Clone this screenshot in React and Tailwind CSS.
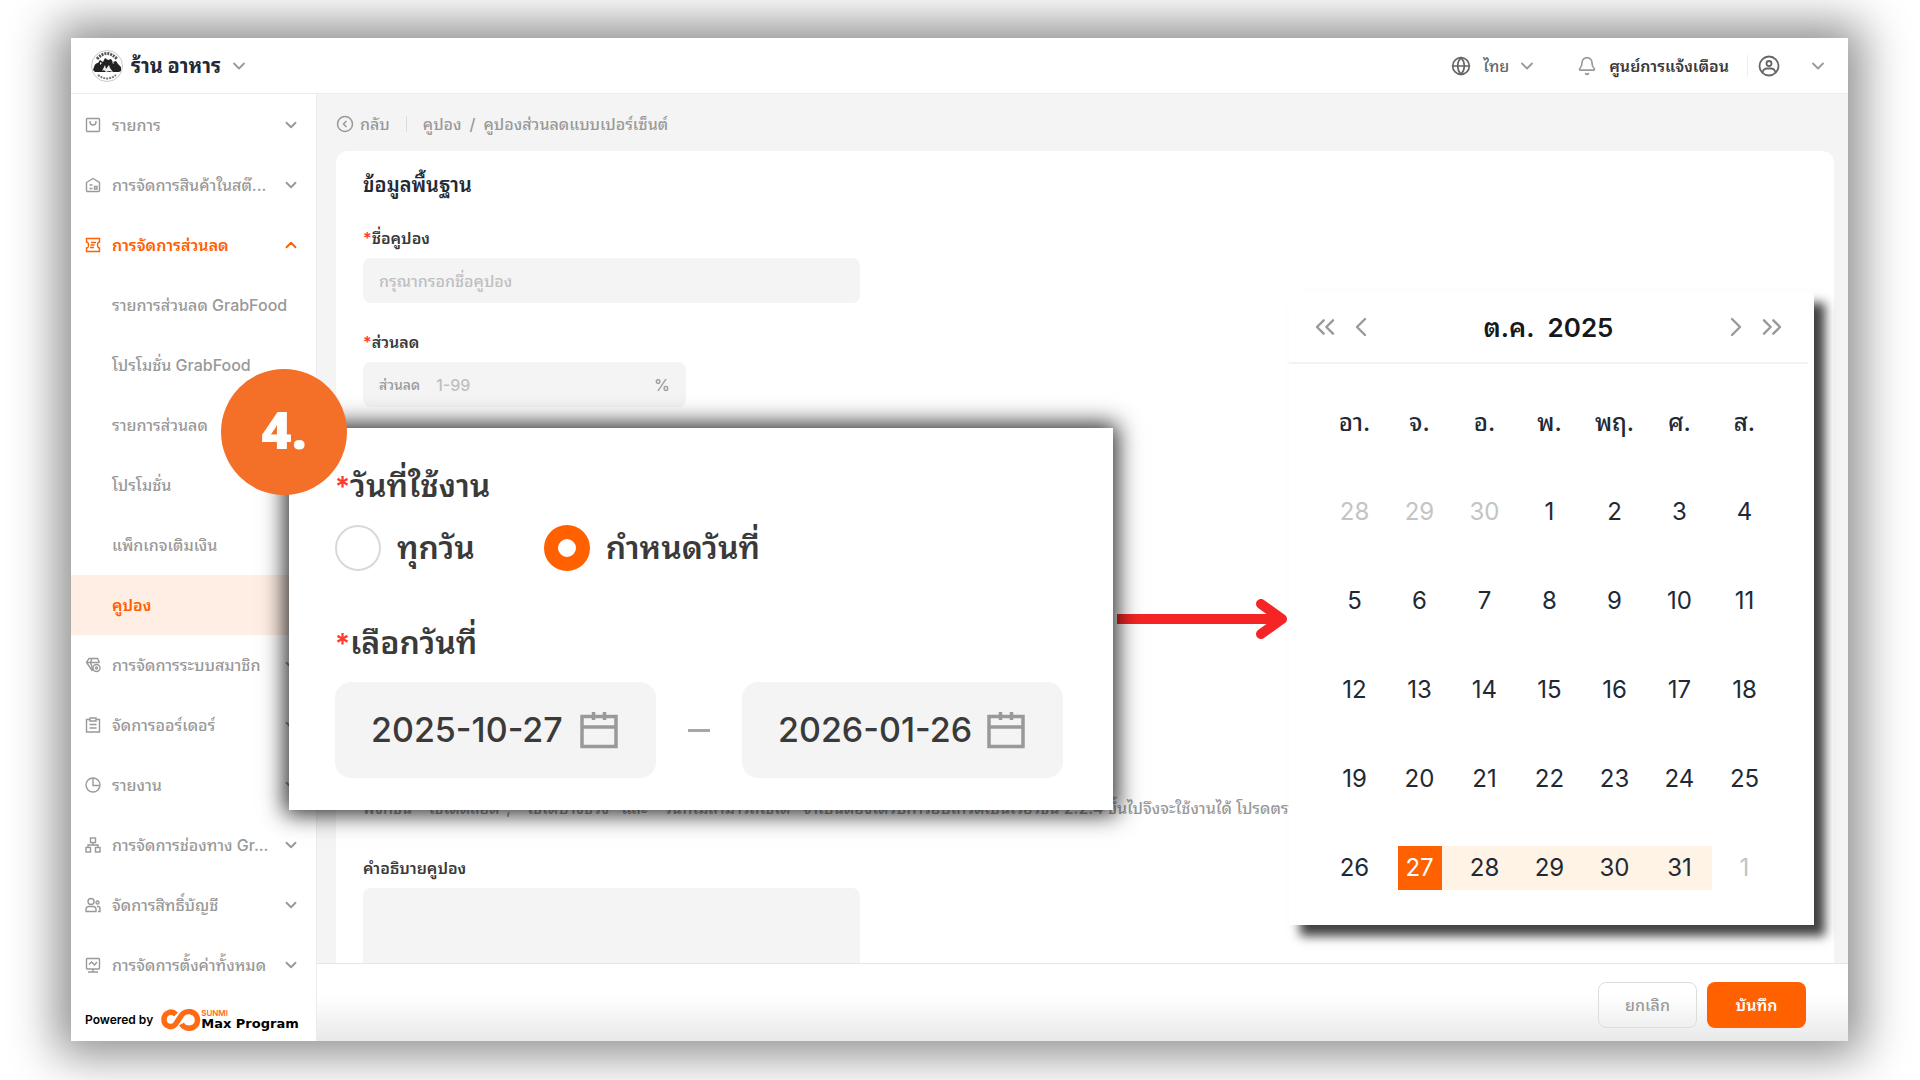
import React, { useState } from "react";
import { ChevronDown, ChevronUp, ChevronLeft, ChevronRight, ChevronsLeft, ChevronsRight, Globe, Bell } from "lucide-react";

const menu = [
  { label: "รายการ", icon: "bag" },
  { label: "การจัดการสินค้าในสต๊...", icon: "store" },
  { label: "การจัดการส่วนลด", icon: "ticket", open: true },
  { label: "รายการส่วนลด GrabFood", sub: true },
  { label: "โปรโมชั่น GrabFood", sub: true },
  { label: "รายการส่วนลด", sub: true },
  { label: "โปรโมชั่น", sub: true },
  { label: "แพ็กเกจเติมเงิน", sub: true },
  { label: "คูปอง", sub: true, active: true },
  { label: "การจัดการระบบสมาชิก", icon: "gem" },
  { label: "จัดการออร์เดอร์", icon: "clipboard" },
  { label: "รายงาน", icon: "pie" },
  { label: "การจัดการช่องทาง Gr...", icon: "network" },
  { label: "จัดการสิทธิ์บัญชี", icon: "users" },
  { label: "การจัดการตั้งค่าทั้งหมด", icon: "monitor" },
];

const weekDays = ["อา.", "จ.", "อ.", "พ.", "พฤ.", "ศ.", "ส."];
const weeks = [
  [28, 29, 30, 1, 2, 3, 4],
  [5, 6, 7, 8, 9, 10, 11],
  [12, 13, 14, 15, 16, 17, 18],
  [19, 20, 21, 22, 23, 24, 25],
  [26, 27, 28, 29, 30, 31, 1],
];

const shapes = {
  bag: (
    <>
      <rect x="1.5" y="1.5" width="13" height="13" rx="1" />
      <path d="M5 4v1a3 3 0 0 0 6 0V4" />
    </>
  ),
  store: (
    <>
      <path d="M1.5 5.5 8 1.5l6.5 4v8a1 1 0 0 1-1 1h-11a1 1 0 0 1-1-1z" />
      <path d="M4.5 8h3M4.5 11.5h3M9.5 9.5H12V12H9.5z" />
    </>
  ),
  ticket: (
    <>
      <path d="M1.5 1.5h13V5c-1.5 0-2 1-2 3s.5 3 2 3v3.5h-13V11c1.5 0 2-1 2-3s-.5-3-2-3z" />
      <path d="M6 5.5h5M5.5 8h4M5 10.5h4" />
    </>
  ),
  gem: (
    <>
      <path d="M7.5 14 1.5 5.5l2.5-4h8.5l2 4M1.5 5.5h13M5.5 5.5 8 13M7 1.5l-1.5 4" />
      <circle cx="11.5" cy="11" r="3.5" />
      <circle cx="11.5" cy="11" r="1" />
    </>
  ),
  clipboard: (
    <>
      <path d="M5 2.5H1.5V15h13V2.5H11" />
      <path d="M5 1h6v3H5zM4.5 7.5h7M4.5 11h7" />
    </>
  ),
  pie: (
    <>
      <circle cx="8" cy="8" r="7" />
      <path d="M8 1v7.5h7" />
    </>
  ),
  network: (
    <>
      <rect x="5.5" y="1" width="5" height="4.5" />
      <rect x="1" y="10.5" width="4.5" height="4.5" />
      <rect x="10.5" y="10.5" width="4.5" height="4.5" />
      <path d="M8 5.5V8M3 10.5V8h10v2.5" />
    </>
  ),
  users: (
    <>
      <circle cx="6" cy="4.5" r="3" />
      <path d="M1 14.5v-2a3 3 0 0 1 3-3h4a3 3 0 0 1 3 3v2z" />
      <circle cx="12.5" cy="5.5" r="1.5" />
      <path d="M12 9.5h1a2 2 0 0 1 2 2v3h-2" />
    </>
  ),
  monitor: (
    <>
      <rect x="1.5" y="1.5" width="13" height="10.5" rx="1" />
      <path d="M4 7.5 6.5 5l3 3L12 5M3 15h10M8 12v3" />
    </>
  ),
};

const MenuIcon = ({ name }) => (
  <svg viewBox="0 0 16 16" className="w-4 h-4 shrink-0" fill="none" stroke="currentColor" strokeWidth="1.4">
    {shapes[name]}
  </svg>
);

const CalendarIcon = () => (
  <svg viewBox="0 0 38 38" className="w-[38px] h-[38px] shrink-0" fill="none" stroke="#999999" strokeWidth="3.5">
    <path d="M2 5.5h34v30H2zM2 16h34M13.5 1v8M24.5 1v8" />
  </svg>
);

const ShopLogo = () => (
  <svg viewBox="0 0 32 32" className="w-8 h-8">
    <circle cx="16" cy="16" r="15.5" fill="#fff" stroke="#c9c9c9" />
    <path d="M6 9q10-11 20 0" fill="none" stroke="#555" strokeWidth="3" strokeDasharray="2 1" />
    <path d="M3 17q1-4 4-4l2-3 3 2 2-4 3 2 3-1 2 3 3-1 2 3 3 3v4l-2 1H4l-2-2z" fill="#222" />
    <path d="m11 21 3-6 1 4 3-4 1 3 3 4-4-1-3 1-2-2zM9 12l2 1-2 2zM21 11l2 2-1 1z" fill="#eee" />
    <path d="M7 25q9 7 18 0" fill="none" stroke="#777" strokeWidth="2" strokeDasharray="2 1" />
  </svg>
);

const SunmiLogo = () => (
  <svg viewBox="0 0 40 24" className="w-10 h-6" fill="none" stroke="#ff6a13" strokeWidth="5.5">
    <path d="M15 6.500C10 1.500 3 5.500 3 11.500c0 7 8 9.500 12 4l5-7.500C24 1 36.500 2.500 36.500 12S24 22.500 20.500 16" />
  </svg>
);

const Header = () => (
  <header className="h-[56px] shrink-0 flex items-center justify-between bg-white border-b border-[#ececec] pl-5 pr-5">
    <button className="flex items-center text-xl font-bold text-[#222936]">
      <ShopLogo />
      <span className="ml-2 mr-2">ร้าน อาหาร</span>
      <ChevronDown className="w-5 h-5 text-[#999999]" strokeWidth={2.2} />
    </button>
    <div className="flex items-center text-base text-[#666666]">
      <button className="flex items-center font-medium">
        <Globe className="w-5 h-5" strokeWidth={2} />
        <span className="ml-3 mr-2">ไทย</span>
        <ChevronDown className="w-5 h-5 text-[#999999]" strokeWidth={2.2} />
      </button>
      <button className="flex items-center ml-10 font-semibold text-[#3a3a3a]">
        <Bell className="w-5 h-5 text-[#999999]" strokeWidth={2} />
        <span className="ml-3">ศูนย์การแจ้งเตือน</span>
      </button>
      <button className="flex items-center ml-[18px] pl-2.5 border-l border-[#eeeeee]">
        <svg viewBox="0 0 22 22" className="w-[22px] h-[22px]" fill="none" stroke="currentColor" strokeWidth="1.8">
          <circle cx="11" cy="11" r="9.5" />
          <circle cx="11" cy="8.5" r="2.5" />
          <path d="M4.500 17.500q1-4 4.500-4h4q3.500 0 4.500 4" />
        </svg>
        <ChevronDown className="w-5 h-5 ml-7 text-[#999999]" strokeWidth={2.2} />
      </button>
    </div>
  </header>
);

const Sidebar = () => (
  <aside className="w-[246px] shrink-0 flex flex-col bg-white border-r border-[#ececec]">
    <nav className="pt-px">
      {menu.map((item) => (
        <a
          key={item.label}
          href="#"
          className={`h-[60px] flex items-center pl-3.5 pr-4 text-base whitespace-nowrap ${
            item.active
              ? "bg-[#ffeee3] font-semibold text-[#ff6000]"
              : item.open
                ? "font-semibold text-[#ff6000]"
                : "font-medium text-[#999999]"
          }`}
        >
          {item.sub ? <span className="w-4 shrink-0" /> : <MenuIcon name={item.icon} />}
          <span className="flex-1 ml-[11px]">{item.label}</span>
          {!item.sub &&
            (item.open ? (
              <ChevronUp className="w-[18px] h-[18px]" strokeWidth={2.5} />
            ) : (
              <ChevronDown className="w-[18px] h-[18px]" strokeWidth={2.5} />
            ))}
        </a>
      ))}
    </nav>
    <div className="flex-1 flex items-center pt-1 pl-3.5 text-xs font-semibold text-black whitespace-nowrap">
      Powered by
      <span className="ml-2">
        <SunmiLogo />
      </span>
      <span className="leading-none">
        <span className="block text-[8px] leading-[8px] text-[#ff6a13]">SUNMI</span>
        <span className="block font-['DejaVu_Sans'] text-[13px] leading-[14px] font-bold">Max Program</span>
      </span>
    </div>
  </aside>
);

const Label = ({ htmlFor, children, required }) => (
  <label htmlFor={htmlFor} className="block text-base leading-6 font-semibold text-[#3a3a3a]">
    {required && <span className="text-[#ff3b30]">*</span>}
    {children}
  </label>
);

const CouponForm = () => (
  <section className="flex-1 min-h-0 overflow-hidden bg-white rounded-t-xl ml-[19px] mr-3.5 px-[27px] pt-[18px]">
    <h2 className="text-xl leading-8 font-semibold text-[#222936] mb-[25px]">ข้อมูลพื้นฐาน</h2>
    <Label htmlFor="name" required>ชื่อคูปอง</Label>
    <input
      id="name"
      placeholder="กรุณากรอกชื่อคูปอง"
      className="block w-[497px] h-[45px] mt-2 mb-[27px] px-4 rounded-lg bg-[#f4f4f4] text-base font-medium placeholder:text-[#bfbfbf]"
    />
    <Label htmlFor="discount" required>ส่วนลด</Label>
    <div className="w-[323px] h-[45px] mt-2 px-4 flex items-center rounded-lg bg-[#f4f4f4] font-medium text-[#999999]">
      <span className="text-sm">ส่วนลด</span>
      <input id="discount" placeholder="1-99" className="flex-1 min-w-0 ml-4 text-base placeholder:text-[#bfbfbf]" />
      <span className="text-base">%</span>
    </div>
    <p className="mt-[389px] text-base leading-6 font-medium text-[#999999] whitespace-nowrap">
      ฟังก์ชัน &nbsp;"ใช้ได้ตลอด", &nbsp;"ใช้ได้บางช่วง" และ &nbsp;"วันที่ไม่สามารถใช้ได้" จำเป็นต้องได้รับการอัปเกรดเป็นเวอร์ชัน 2.2.4 ขึ้นไปจึงจะใช้งานได้ โปรดตรวจสอบ
    </p>
    <div className="mt-9">
      <Label htmlFor="desc">คำอธิบายคูปอง</Label>
      <textarea id="desc" className="block w-[497px] h-[120px] mt-2 rounded-lg bg-[#f4f4f4] resize-none" />
    </div>
  </section>
);

const DateField = ({ id, label, value }) => (
  <div className="w-[321px] h-[96px] flex items-center pl-9 pr-[38px] rounded-2xl bg-[#f4f4f4]">
    <input
      id={id}
      aria-label={label}
      defaultValue={value}
      className="flex-1 min-w-0 text-[34px] font-medium text-[#3a3a3a]"
    />
    <CalendarIcon />
  </div>
);

const DatePanel = () => {
  const [mode, setMode] = useState("range");
  const radio = "appearance-none w-[46px] h-[46px] rounded-full border-2 border-[#d9d9d9] checked:border-[14px] checked:border-[#ff6000] bg-white";

  return (
    <section className="relative shrink-0 w-[824px] h-[382px] mt-[136px] pl-[46px] pt-9 bg-white text-[32px] leading-[44px] font-semibold text-[#3a3a3a] shadow-[0_0_22px_4px_rgba(0,0,0,0.85)]">
      <p><span className="text-[28px] text-[#ff3b30]">*</span>วันที่ใช้งาน</p>
      <div className="flex items-center mt-4">
        <label className="flex items-center gap-4">
          <input type="radio" name="mode" className={radio} checked={mode === "all"} onChange={() => setMode("all")} />
          ทุกวัน
        </label>
        <label className="flex items-center gap-4 ml-[69px]">
          <input type="radio" name="mode" className={radio} checked={mode === "range"} onChange={() => setMode("range")} />
          กำหนดวันที่
        </label>
      </div>
      <label htmlFor="start" className="block mt-[50px]"><span className="text-[28px] text-[#ff3b30]">*</span>เลือกวันที่</label>
      <div className="flex items-center mt-4">
        <DateField id="start" label="วันที่เริ่มต้น" value="2025-10-27" />
        <span className="w-[22px] h-[3px] mx-8 bg-[#a6a6a6]" />
        <DateField id="end" label="วันที่สิ้นสุด" value="2026-01-26" />
      </div>
      <div className="absolute -left-[68px] -top-[59px] w-[126px] h-[126px] pb-1.5 flex items-center justify-center rounded-full bg-[#f46f27] text-white font-['Open_Sans'] text-[52px] font-extrabold">
        4.
      </div>
    </section>
  );
};

const Arrow = () => (
  <div className="flex-1 flex items-center mt-[305px] pl-1 pr-0.5 h-[44px]">
    <span className="flex-1 h-2.5 bg-[#f52525]" />
    <svg viewBox="0 0 32 40" className="w-8 h-10 -ml-2" fill="none" stroke="#f52525" strokeWidth="10" strokeLinecap="round" strokeLinejoin="round">
      <path d="M6 5 27 20 6 35M27 20H0" />
    </svg>
  </div>
);

const Calendar = () => {
  const cellStyle = (w, i, day) => {
    if ((w === 0 && i < 3) || (w === 4 && i === 6)) return "text-[#c4c4c4]";
    if (w === 4 && day === 27) return "text-white";
    return "text-[#222936]";
  };

  const rangeStyle = (w, i) => {
    if (w !== 4 || i === 0 || i === 6) return "";
    return i === 1 ? "bg-linear-to-r from-transparent from-50% to-[#fff3e6] to-50%" : "bg-[#fff3e6]";
  };

  return (
    <section className="shrink-0 w-[525px] bg-white shadow-[11px_11px_10px_0_rgba(0,0,0,0.75)]">
      <div className="h-[72px] mr-1.5 flex items-center px-5 border-b-2 border-[#f2f2f2] text-[#999999]">
        <button aria-label="ปีก่อน"><ChevronsLeft className="w-8 h-8" strokeWidth={1.8} /></button>
        <button aria-label="เดือนก่อน" className="ml-1"><ChevronLeft className="w-8 h-8" strokeWidth={1.8} /></button>
        <p className="flex-1 text-center text-[26px] font-semibold text-[#16181c]">ต.ค.&nbsp; 2025</p>
        <button aria-label="เดือนถัดไป" className="mr-1"><ChevronRight className="w-8 h-8" strokeWidth={1.8} /></button>
        <button aria-label="ปีถัดไป"><ChevronsRight className="w-8 h-8" strokeWidth={1.8} /></button>
      </div>
      <table className="table-fixed w-[455px] ml-[33px] mt-[15px] mb-[13px] text-2xl text-center">
        <thead>
          <tr className="text-[#222936]">
            {weekDays.map((d) => <th key={d} className="h-[88px] p-0 font-medium">{d}</th>)}
          </tr>
        </thead>
        <tbody>
          {weeks.map((week, w) => (
            <tr key={w}>
              {week.map((day, i) => (
                <td key={i} className={`h-[89px] p-0 ${cellStyle(w, i, day)}`}>
                  <div className={rangeStyle(w, i)}>
                    <button className={`w-11 h-11 ${w === 4 && i === 1 ? "bg-[#ff6000]" : ""}`}>{day}</button>
                  </div>
                </td>
              ))}
            </tr>
          ))}
        </tbody>
      </table>
    </section>
  );
};

export default function App() {
  return (
    <div className="h-screen flex bg-white pl-[71px] pr-[72px] pt-[38px] pb-[39px] overflow-hidden font-[Inter,'Noto_Sans_Thai_Looped',Loma,Waree,Garuda,'Noto_Sans',sans-serif]">
      <div className="relative flex-1 flex flex-col shadow-[0_0_44px_14px_rgba(0,0,0,0.45)]">
        <Header />
        <div className="flex-1 min-h-0 flex">
          <Sidebar />
          <main className="flex-1 min-w-0 flex flex-col bg-[#f4f4f4]">
            <div className="h-[57px] shrink-0 flex items-center pt-0.5 pl-[19px] text-base font-medium text-[#999999]">
              <a href="#" className="flex items-center">
                <svg viewBox="0 0 18 18" className="w-[18px] h-[18px] mr-1.5" fill="none" stroke="currentColor" strokeWidth="1.5">
                  <circle cx="9" cy="9" r="7.5" />
                  <path d="M10.5 6l-3 3 3 3" />
                </svg>
                กลับ
              </a>
              <span className="w-px h-4 mx-4 bg-[#dddddd]" />
              <a href="#">คูปอง</a>
              <span className="mx-2">/</span>
              <span>คูปองส่วนลดแบบเปอร์เซ็นต์</span>
            </div>
            <CouponForm />
            <footer className="h-[78px] shrink-0 flex items-center justify-end gap-2.5 pr-[42px] pt-1 border-t border-[#e6e6e6] bg-linear-to-b from-white from-40% to-[#e9e9e9] text-base">
              <button className="w-[99px] h-[46px] rounded-lg border border-[#dddddd] font-medium text-[#999999]">ยกเลิก</button>
              <button className="w-[99px] h-[46px] rounded-lg bg-[#ff6000] font-semibold text-white">บันทึก</button>
            </footer>
          </main>
        </div>
        <div className="absolute left-[218px] right-[34px] top-[254px] flex items-start">
          <DatePanel />
          <Arrow />
          <Calendar />
        </div>
      </div>
    </div>
  );
}
